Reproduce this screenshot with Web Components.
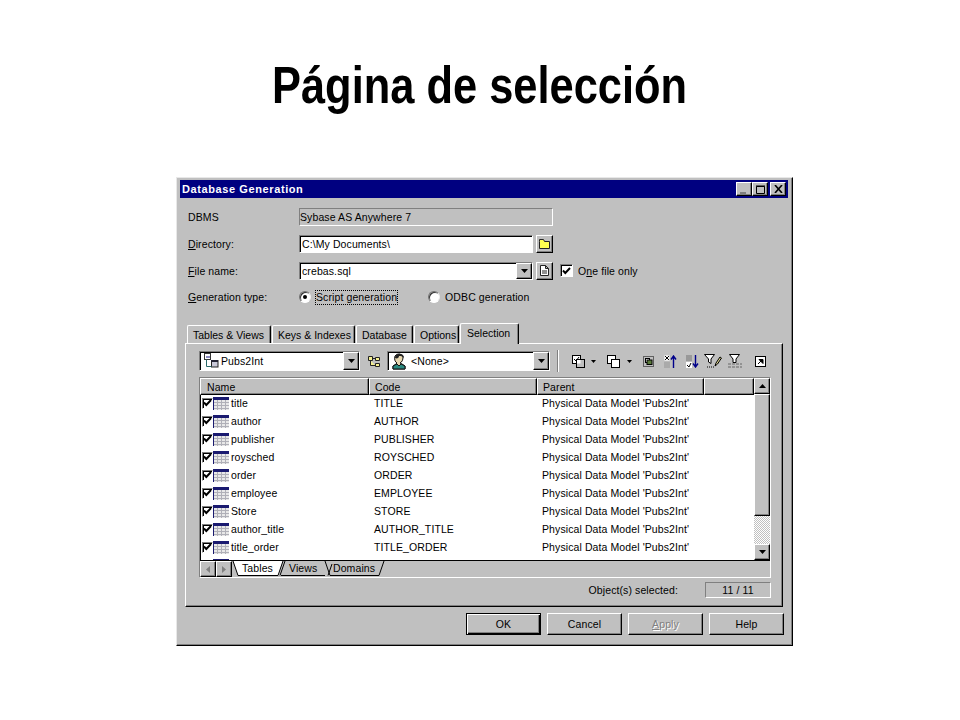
<!DOCTYPE html>
<html><head><meta charset="utf-8"><style>
html,body{margin:0;background:#fff}
body{width:960px;height:720px;overflow:hidden;font-family:"Liberation Sans",Arial,sans-serif}
</style></head><body>
<slide-page></slide-page>
<script>
const BEVEL_OUT='border:1px solid;border-color:#fff #000 #000 #fff;box-shadow:inset -1px -1px 0 #808080';
const BEVEL_IN='border:1px solid;border-color:#808080 #fff #fff #808080;box-shadow:inset 1px 1px 0 #000';
const TXT='font-size:10.5px;letter-spacing:.1px';
const sheet=(css)=>`<style>:host{display:block;box-sizing:border-box}*{box-sizing:border-box}${css}</style>`;
function def(name,html){
  customElements.define(name,class extends HTMLElement{
    constructor(){super();this.attachShadow({mode:'open'});}
    connectedCallback(){this.shadowRoot.innerHTML=typeof html==='function'?html(this):html;}
  });
}
const arrow=(d='down',c='#000')=>`<svg width="7" height="4" viewBox="0 0 7 4" style="display:block${d==='up'?';transform:rotate(180deg)':''}"><path d="M0 0h7L3.500 4z" fill="${c}"/></svg>`;

def('win-button',e=>sheet(`:host{width:75px;height:22px;background:#c0c0c0;display:flex;align-items:center;justify-content:center;${TXT};${BEVEL_OUT}}
:host([default]){border:1px solid #000;box-shadow:inset 1px 1px 0 #fff,inset -1px -1px 0 #000,inset -2px -2px 0 #808080}
:host([disabled]){color:#808080;text-shadow:1px 1px 0 #fff}`)+`<slot></slot>`);

def('win-field',e=>{const ro=e.hasAttribute('readonly');return sheet(`:host{height:18px;background:${ro?'#c0c0c0':'#fff'};${BEVEL_IN};
display:flex;align-items:center;padding-left:${ro?0:2}px;${TXT};${ro?'box-shadow:none':''}}
.t{flex:1;white-space:nowrap;overflow:hidden}
.b{width:16px;height:16px;background:#c0c0c0;${BEVEL_OUT};display:flex;align-items:center;justify-content:center}
:host([tall]) .b{height:18px}`)+
`<div class="t"><slot></slot></div>${e.hasAttribute('combo')?`<div class="b">${arrow()}</div>`:''}`});

def('square-btn',sheet(`:host{width:17px;height:18px;background:#c0c0c0;${BEVEL_OUT};display:flex;align-items:center;justify-content:center}`)+`<slot></slot>`);
def('caption-btn',sheet(`:host{width:16px;height:14px;background:#c0c0c0;${BEVEL_OUT};display:flex;align-items:center;justify-content:center}`)+`<slot></slot>`);
def('check-box',sheet(`:host{width:13px;height:13px;flex:none;background:#fff;${BEVEL_IN};display:flex;align-items:center;justify-content:center}`)+
`<svg width="9" height="8" viewBox="0 0 9 8"><path d="M1 3.500 3.300 6 8 1" fill="none" stroke="#000" stroke-width="1.900"/></svg>`);
def('radio-btn',e=>sheet(`:host{width:12px;height:12px;flex:none;border-radius:50%;background:#fff;border:1px solid;border-color:#707070 #eee #fff #707070;box-shadow:inset 1px 1px 0 #333;display:flex;align-items:center;justify-content:center}
i{width:4px;height:4px;border-radius:50%;background:#000;display:${e.hasAttribute('on')?'block':'none'}}`)+`<i></i>`);

def('page-tab',e=>{const a=e.hasAttribute('active');return sheet(`:host{width:${e.getAttribute('w')}px;height:${a?21:18}px;padding-left:${a?6:5}px;font-size:10.5px;background:#c0c0c0;
border:1px solid;border-bottom:0;border-color:#fff #000 #c0c0c0 #fff;border-radius:2px 2px 0 0;box-shadow:inset -1px 0 0 #808080;display:flex;align-items:center;white-space:nowrap;margin-right:1px;
${a?'margin:0 0 -1px 0;position:relative;z-index:1;padding-bottom:3px;':''}}`)+`<slot></slot>`});

def('tool-bar',sheet(`:host{display:flex;align-items:center;height:20px}
.c1{width:161px;height:20px}.c2{width:163px;height:20px;margin-left:6px}
.ico{margin:0 0 0 7px;width:14px;height:17px}
.sep{width:2px;height:22px;border-left:1px solid #808080;border-right:1px solid #fff;margin:0 13px 0 7px}
.tools{display:flex;align-items:center}
.tools svg{display:block;flex:none}
.lbl{display:flex;align-items:center;gap:4px;margin-left:1px}
`)+`<win-field combo tall class="c1"><span class="lbl" style="gap:2px">
<svg width="16" height="16" viewBox="0 0 16 16"><rect x="1.500" y=".5" width="6" height="6" fill="#fff" stroke="#333"/><rect x="3" y="3" width="4" height="2" fill="#8a8ac0"/><rect x="8.500" y="7.500" width="6.500" height="6.500" fill="#c8c8d8" stroke="#222"/><rect x="8" y="7" width="7" height="2" fill="#223"/><path d="M3.500 6.500v7h5" fill="none" stroke="#2a6a6a"/></svg>Pubs2Int</span></win-field>
<svg class="ico" viewBox="0 0 14 17"><path d="M1.500 3.500h4v4h-4zM8.500 4.500h4v3h-4zM8.500 10.500h4v3h-4zM5.500 5.500h3M3.500 7.500v5h5" fill="#f6f090" stroke="#222"/></svg>
<win-field combo tall class="c2"><span class="lbl">
<svg width="16" height="17" viewBox="0 0 16 17"><path d="M4 3a4.500 4.500 0 0 1 8 1c0 3-1 5-3 6l2 1 3 2v3H2v-3l3-2 1-1C4 9 3 6 4 3z" fill="#e8d8b0" stroke="#111"/><path d="M4 5C4 2 7 0 10 1c2 .5 3 2 3 4-2-2-3-2-5-2 0 2-2 3-4 2z" fill="#222"/><path d="M2 13l4-2 2 2 2-2 4 2v3H2z" fill="#2a8a80" stroke="#111"/></svg>&lt;None&gt;</span></win-field>
<div class="sep"></div>
<div class="tools">
<svg width="13" height="13" viewBox="0 0 13 13"><rect x=".5" y=".5" width="8" height="8" fill="#fff" stroke="#000"/><path d="M2 4l2 2 3-4" fill="none" stroke="#000"/><rect x="4.500" y="4.500" width="8" height="8" fill="#c0c0c0" stroke="#000"/><rect x="5" y="5" width="3.500" height="3.500" fill="#fff"/></svg>
<svg style="margin-left:6px;margin-right:11px" width="5" height="3" viewBox="0 0 5 3"><path d="M0 0h5L2.500 3z"/></svg>
<svg width="13" height="13" viewBox="0 0 13 13"><rect x=".5" y=".5" width="8" height="8" fill="#fff" stroke="#000"/><rect x="4.500" y="4.500" width="8" height="8" fill="#fff" stroke="#000"/></svg>
<svg style="margin-left:7px;margin-right:11px" width="5" height="3" viewBox="0 0 5 3"><path d="M0 0h5L2.500 3z"/></svg>
<svg width="11" height="11" viewBox="0 0 11 11" style="margin-right:10px"><rect x=".5" y=".5" width="10" height="10" fill="none" stroke="#000" stroke-dasharray="1 1"/><rect x="2.500" y="2.500" width="4" height="4" fill="#fff" stroke="#000"/><rect x="4" y="4" width="5" height="4.500" fill="#5a7a3a" stroke="#000"/></svg>
<svg width="13" height="13" viewBox="0 0 13 13" style="margin-right:9px"><rect x="0" y="0" width="6" height="6" fill="#fff" stroke="#aaa" stroke-width=".6"/><path d="M1 1l4 4M5 1 1 5" stroke="#000"/><rect x="0" y="7" width="6" height="6" fill="#aaa"/><path d="M9.500 13V2M7 4.500 9.500 1 12 4.500" fill="none" stroke="#00008a" stroke-width="1.400"/></svg>
<svg width="13" height="13" viewBox="0 0 13 13" style="margin-right:5px"><rect x="0" y="0" width="6" height="6" fill="#999"/><rect x="0" y="7" width="6" height="6" fill="#fff"/><path d="M1 10l2 2 2-4" fill="none" stroke="#000"/><path d="M9.500 0V11M7 8.500 9.500 12 12 8.500" fill="none" stroke="#00008a" stroke-width="1.400"/></svg>
<svg width="18" height="14" viewBox="0 0 18 14" style="margin-right:5px"><path d="M.5.5h10L7 5v4.500L4.500 8V5z" fill="#fff" stroke="#000"/><path d="M11 12l1-3 4-6 1.500 1-4 6z" fill="#e0d890" stroke="#000"/><path d="M3 13h7" stroke="#000" stroke-dasharray="1 1"/></svg>
<svg width="16" height="14" viewBox="0 0 16 14" style="margin-right:12px"><path d="M2.500.5h10L9 5v3.500H6V5z" fill="#fff" stroke="#000"/><path d="M1 10h14M1 13h14" stroke="#666" stroke-dasharray="3 1"/></svg>
<svg width="11" height="11" viewBox="0 0 11 11"><rect x=".5" y=".5" width="10" height="10" fill="#fff" stroke="#000"/><path d="M3 8l4-4M4 3.500h4v4z" stroke="#000" fill="#000"/></svg>
</div>`);

def('table-icon',sheet(`:host{width:16px;height:13px;flex:none}svg{display:block}`)+
`<svg width="16" height="13" viewBox="0 0 16 13"><rect width="16" height="13" fill="#e8e8e8"/><rect width="16" height="3" fill="#1a1a70"/><rect x="0" y="0" width="1" height="13" fill="#1a1a70"/><path d="M1 5.500h15M1 8.500h15M1 11.500h15M4.500 3v10M8.500 3v10M12.500 3v10" stroke="#b0b0b8"/></svg>`);

def('list-row',e=>{const blank=!e.getAttribute('n');return sheet(`:host{display:grid;grid-template-columns:172px 168px 1fr;height:18px;${TXT};align-items:center;white-space:nowrap}
.n{display:flex;align-items:center}
check-box{margin:0 0 0 2px;width:11px;height:11px}
table-icon{margin-left:0}
.t{margin-left:2px}
.c,.p{padding-left:2px}`)+`<div class="n"><check-box></check-box><table-icon></table-icon>${blank?'':`<span class="t">${e.getAttribute('n')}</span>`}</div>${blank?'':`<div class="c">${e.getAttribute('c')}</div><div class="p">Physical Data Model 'Pubs2Int'</div>`}`});

def('data-list',sheet(`:host{width:572px;height:201px;${BEVEL_IN};background:#fff;display:grid;grid-template-columns:1fr 16px;grid-template-rows:182px 17px;overflow:hidden}
.main{display:flex;flex-direction:column;min-width:0;overflow:hidden}
.head{display:flex;height:17px;margin-bottom:-1px;flex:none;${TXT};position:relative;z-index:1}
.head div{background:#c0c0c0;${BEVEL_OUT};padding:0 0 0 5px;display:flex;align-items:center}
.rows{flex:1;overflow:hidden}
.sb{display:flex;flex-direction:column;background:repeating-conic-gradient(#fff 0 25%,#c0c0c0 0 50%) 0 0/2px 2px}
.ab{height:16px;flex:none;background:#c0c0c0;${BEVEL_OUT};display:flex;align-items:center;justify-content:center}
.thumb{height:122px;flex:none;background:#c0c0c0;${BEVEL_OUT}}
.sp{flex:1}
.tabs{grid-column:1/3;background:#c0c0c0;border-top:1px solid #000;display:flex;${TXT}}
.nav{width:32px;display:flex;flex:none}
.nav div{width:16px;height:16px;background:#c0c0c0;${BEVEL_OUT};display:flex;align-items:center;justify-content:center}
.sheets{position:relative;flex:1}
.sheets svg{position:absolute;left:0;top:0}
.sheets span{position:absolute;top:1px}
`)+`<div class="main"><div class="head"><div style="width:169px;padding-left:6px">Name</div><div style="width:168px">Code</div><div style="width:167px">Parent</div><div style="flex:1"></div></div>
<div class="rows"><slot></slot></div></div>
<div class="sb"><div class="ab">${arrow('up')}</div><div class="thumb"></div><div class="sp"></div><div class="ab">${arrow()}</div></div>
<div class="tabs"><div class="nav"><div><svg width="4" height="7" viewBox="0 0 4 7"><path d="M4 0v7L0 3.500z" fill="#808080"/></svg></div><div><svg width="4" height="7" viewBox="0 0 4 7"><path d="M0 0v7l4-3.500z" fill="#808080"/></svg></div></div>
<div class="sheets"><svg width="160" height="16" viewBox="0 0 160 16"><path d="M48 14.500 53 0M49 14.500H93M93 0l5 14.500M96 14.500 100 3M98 14.500H147L152 0" fill="none" stroke="#000"/><path d="M1 0l5 14.500h40L51 0z" fill="#fff"/><path d="M1 0l5 14.500h40L51 0" fill="none" stroke="#000"/></svg>
<span style="left:10px">Tables</span><span style="left:57px">Views</span><span style="left:101px">Domains</span></div></div>`);

def('selection-panel',sheet(`:host{height:264px;border:1px solid;border-color:#fff #000 #000 #fff;box-shadow:inset -1px -1px 0 #808080;padding:7px 0 0 13px;display:flex;flex-direction:column;background:#c0c0c0}
.status{display:flex;align-items:center;justify-content:flex-end;margin:4px 11px 0 0;${TXT}}
.count{width:66px;height:16px;margin-left:27px;border:1px solid;border-color:#808080 #fff #fff #808080;display:flex;align-items:center;justify-content:center}
data-list{margin-top:6px}`)+`<tool-bar></tool-bar><data-list>
<list-row n="title" c="TITLE"></list-row><list-row n="author" c="AUTHOR"></list-row><list-row n="publisher" c="PUBLISHER"></list-row><list-row n="roysched" c="ROYSCHED"></list-row><list-row n="order" c="ORDER"></list-row><list-row n="employee" c="EMPLOYEE"></list-row><list-row n="Store" c="STORE"></list-row><list-row n="author_title" c="AUTHOR_TITLE"></list-row><list-row n="title_order" c="TITLE_ORDER"></list-row><list-row></list-row>
</data-list>
<div class="status">Object(s) selected:<div class="count">11 / 11</div></div>`);

def('db-dialog',sheet(`:host{margin:62px 0 0 176px;width:617px;height:469px;background:#c0c0c0;border:1px solid;border-color:#e8e8e8 #000 #000 #e8e8e8;box-shadow:inset -1px -1px 0 #808080;padding:2px 4px 0 3px;display:flex;flex-direction:column;color:#000}
.title{height:18px;background:#000080;color:#fff;font:bold 11px "Liberation Sans",Arial,sans-serif;letter-spacing:.6px;display:flex;align-items:center;padding:0 2px 0 2px;flex:none}
.title b{flex:1}
.cap{display:flex}
.form{display:grid;grid-template-columns:111px 234px 20px 1fr;grid-auto-rows:26.670px;margin:6px 0 0 8px;${TXT};align-items:center;height:107px;flex:none}
.form>div{white-space:nowrap}
u{text-decoration:underline}
.wide{grid-column:2/4;width:254px}
.chk{display:flex;align-items:center;gap:5px;margin-left:7px}
.radios{grid-column:2/5;display:flex;align-items:center}
.rad{display:flex;align-items:center;gap:5px}
.focus{outline:1px dotted #000;line-height:13px}
.tabs{display:flex;align-items:flex-end;margin:12px 0 0 7px;height:20px;flex:none;position:relative;z-index:1}
selection-panel{margin:0 5px;flex:none}
.btns{display:flex;justify-content:flex-end;gap:6px;margin:6px 4px 0 0;flex:none}
square-btn{margin-left:3px}
`)+`<div class="title"><b>Database Generation</b><div class="cap">
<caption-btn><svg width="8" height="9" viewBox="0 0 8 9"><path d="M0 7h6v2H0z" fill="#808080"/></svg></caption-btn>
<caption-btn><svg width="9" height="9" viewBox="0 0 9 9"><path d="M.5 1.500h8v7h-8z" fill="none" stroke="#000"/><path d="M0 1h9" stroke="#000"/></svg></caption-btn>
<caption-btn style="margin-left:2px"><svg width="9" height="8" viewBox="0 0 9 8"><path d="M1 0l7 8M8 0 1 8" stroke="#000" stroke-width="1.600"/></svg></caption-btn>
</div></div>
<div class="form">
<div>DBMS</div><win-field class="wide" readonly>Sybase AS Anywhere 7</win-field><div></div>
<div><u>D</u>irectory:</div><win-field>C:\\My Documents\\</win-field><square-btn><svg width="11" height="10" viewBox="0 0 11 10"><path d="M.5 2.500V.5h4l1 2h5v7h-10z" fill="#ffff50" stroke="#222"/></svg></square-btn><div></div>
<div><u>F</u>ile name:</div><win-field combo>crebas.sql</win-field><square-btn><svg width="9" height="11" viewBox="0 0 9 11"><path d="M.5.5h5l3 3v7h-8zM5.500.5v3h3M2 6h5M2 8h5" fill="#fff" stroke="#222"/></svg></square-btn>
<div class="chk"><check-box></check-box><span>O<u>n</u>e file only</span></div>
<div><u>G</u>eneration type:</div>
<div class="radios"><div class="rad"><radio-btn on></radio-btn><span class="focus">Script generation</span></div><div class="rad" style="margin-left:31px"><radio-btn></radio-btn><span>ODBC generation</span></div></div>
</div>
<div class="tabs"><page-tab w="84">Tables &amp; Views</page-tab><page-tab w="83">Keys &amp; Indexes</page-tab><page-tab w="57">Database</page-tab><page-tab w="45">Options</page-tab><page-tab w="59" active>Selection</page-tab></div>
<selection-panel></selection-panel>
<div class="btns"><win-button default>OK</win-button><win-button>Cancel</win-button><win-button disabled><u>A</u>pply</win-button><win-button>Help</win-button></div>`);

def('slide-page',sheet(`:host{width:960px;height:720px;overflow:hidden;background:#fff;display:flow-root}
h1{margin:0;padding-top:55px;text-align:center;font:bold 52px "Liberation Sans",Arial,sans-serif;line-height:60px;color:#000;white-space:nowrap}
h1 span{display:inline-block;transform:scaleX(.835)}`)+
`<h1><span>Página de selección</span></h1><db-dialog></db-dialog>`);
</script></body></html>
